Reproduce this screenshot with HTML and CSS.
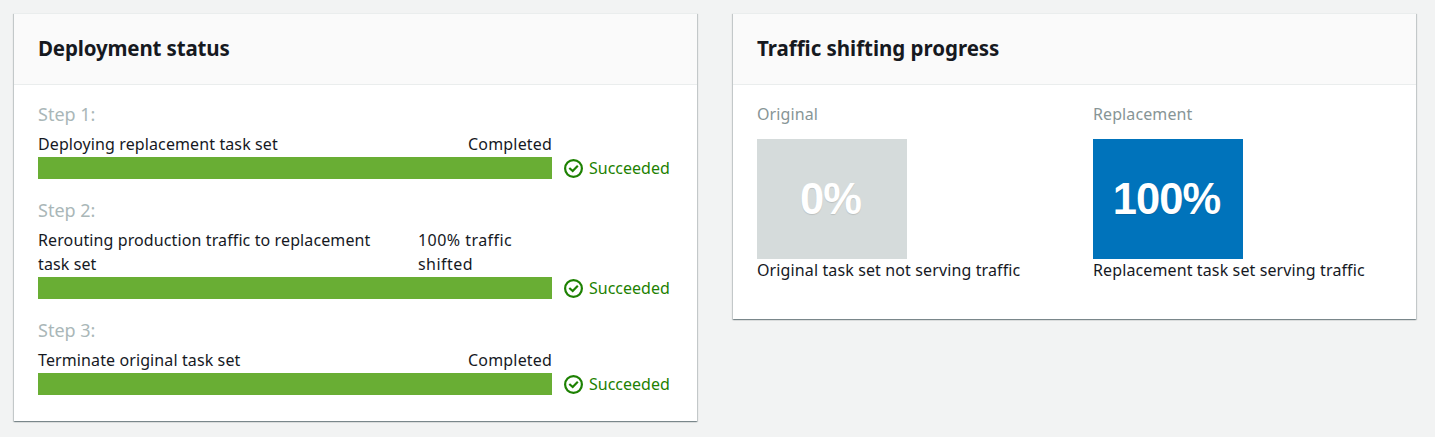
FILE: index.html
```
<!DOCTYPE html>
<html lang="en">
<head>
<meta charset="utf-8">
<title>Deployment</title>
<link rel="stylesheet" href="styles.css">
</head>
<body>
<svg width="0" height="0" class="defs"><symbol id="check" viewBox="0 0 20 20"><circle cx="9.5" cy="10.5" r="8.4"/><path d="M5.3 10 8.7 13 13.8 7.8"/></symbol></svg>
<main class="page">
  <section class="card">
    <header class="card-header"><h2 class="title">Deployment status</h2></header>
    <div class="steps">
      <div class="step">
        <div class="step-label">Step 1:</div>
        <div class="step-info"><span>Deploying replacement task set</span><span class="completed">Completed</span></div>
        <div class="step-progress"><div class="bar"></div><div class="result"><svg class="icon"><use href="#check"/></svg><span>Succeeded</span></div></div>
      </div>
      <div class="step">
        <div class="step-label">Step 2:</div>
        <div class="step-info"><span>Rerouting production traffic to replacement<br>task set</span><span class="shifted">100% traffic<br>shifted</span></div>
        <div class="step-progress"><div class="bar"></div><div class="result"><svg class="icon"><use href="#check"/></svg><span>Succeeded</span></div></div>
      </div>
      <div class="step">
        <div class="step-label">Step 3:</div>
        <div class="step-info"><span>Terminate original task set</span><span class="completed">Completed</span></div>
        <div class="step-progress"><div class="bar"></div><div class="result"><svg class="icon"><use href="#check"/></svg><span>Succeeded</span></div></div>
      </div>
    </div>
  </section>
  <section class="card">
    <header class="card-header"><h2 class="title title-traffic">Traffic shifting progress</h2></header>
    <div class="traffic">
      <div class="task-set">
        <div class="set-label">Original</div>
        <div class="tile tile-idle">0%</div>
        <div class="set-note">Original task set not serving traffic</div>
      </div>
      <div class="task-set">
        <div class="set-label">Replacement</div>
        <div class="tile tile-active">100%</div>
        <div class="set-note">Replacement task set serving traffic</div>
      </div>
    </div>
  </section>
</main>
</body>
</html>
```
FILE: styles.css
```
* { box-sizing: border-box; }
body {
  margin: 0;
  background: #f2f3f3;
  color: #16191f;
  font: 16px/24px "Noto Sans", "Open Sans", sans-serif;
}
.defs { position: absolute; }
.page {
  display: grid;
  grid-template-columns: 683px 683px;
  column-gap: 36px;
  align-items: start;
  padding: 13px 14px;
  min-height: 437px;
}
.card {
  background: #fff;
  box-shadow: 0 1px 1px 0 rgba(0, 28, 36, .3), 1px 1px 1px 0 rgba(0, 28, 36, .15), -1px 1px 1px 0 rgba(0, 28, 36, .15);
  border-top: 1px solid #eaeded;
}
.card-header {
  height: 71px;
  padding: 19px 24px 0;
  background: #fafafa;
  border-bottom: 1px solid #eaeded;
}
.title { margin: 0; font-size: 20.5px; line-height: 30px; font-weight: 700; letter-spacing: -0.15px; }
.title-traffic { letter-spacing: -0.03px; }
.steps { display: flex; flex-direction: column; gap: 20px; padding: 18px 24px 26px; }
.step-label { margin: -1px 0 6px; color: #aab7b8; font-size: 18px; }
.step:first-child .step-label { margin-top: 0; }
.step:first-child { margin-top: -1px; }
.step-info { display: flex; justify-content: space-between; width: 514px; margin-bottom: 1px; white-space: nowrap; letter-spacing: .11px; }
.completed { letter-spacing: .17px; }
.shifted { width: 134px; letter-spacing: .45px; }
.step-progress { display: flex; align-items: center; gap: 12px; height: 22px; }
.bar { width: 514px; height: 22px; background: #69ae34; }
.result { display: flex; align-items: center; gap: 5px; color: #1d8102; }
.icon { width: 20px; height: 20px; fill: none; stroke: #1d8102; stroke-width: 2.2; }
.traffic { display: grid; grid-template-columns: 336px 1fr; padding: 17px 24px 37px; }
.set-label { margin-bottom: 13px; color: #879596; letter-spacing: .1px; }
.set-note { margin-top: -1px; white-space: nowrap; letter-spacing: .12px; }
.tile {
  display: flex;
  align-items: center;
  justify-content: center;
  width: 150px;
  height: 120px;
  padding: 0 3px 0 0;
  color: #fff;
  font: 700 43.5px/50px "Liberation Sans", sans-serif;
  letter-spacing: -1px;
  text-shadow: 0 1px 1px rgba(0, 0, 0, .12);
}
.tile-idle { background: #d5dbdb; }
.tile-active { background: #0073bb; }
```
